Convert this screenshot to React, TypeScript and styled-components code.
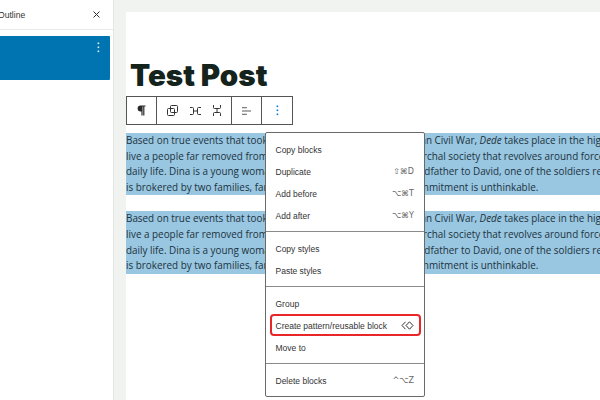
import React from 'react'
import styled, { createGlobalStyle } from 'styled-components'

const GlobalStyle = createGlobalStyle`
  html, body {
    margin: 0;
    padding: 0;
    width: 600px;
    height: 400px;
    overflow: hidden;
    background: #fff;
    font-family: "Liberation Sans", sans-serif;
  }
`

const Page = styled.div`
  position: relative;
  display: flex;
  width: 600px;
  height: 400px;
  overflow: hidden;
`

const Sidebar = styled.aside`
  flex: 0 0 114px;
  box-sizing: border-box;
  border-right: 1px solid #e4e6e4;
  background: #fff;
`

const SidebarHead = styled.div`
  display: flex;
  align-items: center;
  justify-content: space-between;
  height: 30px;
  box-sizing: border-box;
  padding-right: 12px;
  border-bottom: 1px solid #eaecea;
  font-size: 8.6px;
  color: #333;
  & > span {
    margin-left: -2px;
  }
`

const OutlineItem = styled.div`
  display: flex;
  justify-content: flex-end;
  height: 44px;
  margin: 6px 3px 0 0;
  padding: 6px 10px 0 0;
  box-sizing: border-box;
  background: #0073b1;
  border-radius: 0 1px 1px 0;
`

const Main = styled.main`
  flex: 1;
  min-width: 0;
  padding: 12px 0 0 12px;
  background: #f1f3f1;
`

const Canvas = styled.div`
  height: 388px;
  padding-top: 42px;
  box-sizing: border-box;
  background: #fff;
  overflow: hidden;
`

const Title = styled.h1`
  margin: 0 0 37px 4px;
  font-family: Inter, sans-serif;
  font-size: 29.5px;
  font-weight: 900;
  line-height: 42px;
  color: #14231c;
`

const Paragraph = styled.div`
  margin-bottom: 16px;
`

const Line = styled.div`
  height: 15.6px;
  line-height: 15.6px;
  font-family: "Open Sans", sans-serif;
  font-size: 9.9px;
  white-space: nowrap;
  color: #1c3340;
  background: #99c6e0;
`

const Toolbar = styled.div`
  position: absolute;
  left: 126px;
  top: 96px;
  display: flex;
  height: 29px;
  box-sizing: border-box;
  border: 1px solid #555;
  background: #fff;
`

const ToolGroup = styled.div<{ $w: number }>`
  display: flex;
  align-items: center;
  justify-content: space-between;
  width: ${({ $w }) => $w}px;
  box-sizing: border-box;
  padding: 0 10px;
  & + & {
    border-left: 1px solid #555;
  }
  & > svg:only-child {
    margin: 0 auto;
  }
`

const Menu = styled.div`
  position: absolute;
  left: 265px;
  top: 132px;
  width: 160px;
  height: 265px;
  box-sizing: border-box;
  border: 1px solid #6a6a6a;
  border-radius: 2px;
  background: #fff;
`

const Section = styled.div`
  padding: 5px 0;
  & + & {
    border-top: 1px solid #8a8a8a;
  }
`

const Item = styled.div<{ $highlight?: boolean }>`
  position: relative;
  display: flex;
  align-items: center;
  justify-content: space-between;
  height: 22px;
  padding: 1px 10px 0 9.5px;
  box-sizing: border-box;
  font-size: 8.5px;
  white-space: nowrap;
  color: #333;
  ${({ $highlight }) =>
    $highlight &&
    `
    &::after {
      content: '';
      position: absolute;
      left: 3.5px;
      right: 3px;
      top: 0;
      bottom: 0;
      border: 2px solid #e8262a;
      border-radius: 4px;
    }
  `}
`

const Shortcut = styled.span`
  font-family: "DejaVu Sans", sans-serif;
  font-size: 8px;
  color: #666;
`

const Kebab = ({ color }: { color: string }) => (
  <svg width="3" height="11" viewBox="0 0 3 11" fill={color}>
    <rect x="0.6" y="0.5" width="1.6" height="1.6" />
    <rect x="0.6" y="4.5" width="1.6" height="1.6" />
    <rect x="0.6" y="8.5" width="1.6" height="1.6" />
  </svg>
)

const CloseIcon = () => (
  <svg width="9" height="9" viewBox="0 0 9 9" stroke="#333" strokeWidth="1" fill="none">
    <path d="M1.5 1.5l6 6M7.5 1.5l-6 6" />
  </svg>
)

const PilcrowIcon = () => (
  <svg width="9" height="11" viewBox="0 0 9 11" fill="#2a2a2a">
    <path d="M8.5 0.5H3.6a3 3 0 0 0 0 6H4.4V10.5H5.6V1.6H6.2V10.5H7.4V1.6H8.5z" />
  </svg>
)

const GroupIcon = () => (
  <svg width="11" height="11" viewBox="0 0 11 11" stroke="#333" strokeWidth="1" fill="none">
    <rect x="3.5" y="0.5" width="7" height="7" rx="1" />
    <rect x="0.5" y="3.5" width="7" height="7" rx="1" />
  </svg>
)

const RowIcon = () => (
  <svg width="11" height="8" viewBox="0 0 11 8" stroke="#333" strokeWidth="1" fill="none">
    <path d="M0 0.5h2.5a1 1 0 0 1 1 1v5a1 1 0 0 1-1 1H0" />
    <path d="M11 0.5H8.5a1 1 0 0 0-1 1v5a1 1 0 0 0 1 1H11" />
    <path d="M3.5 4h4" />
  </svg>
)

const StackIcon = () => (
  <svg width="8" height="11" viewBox="0 0 8 11" stroke="#333" strokeWidth="1" fill="none">
    <path d="M0.5 0v2.5a1 1 0 0 0 1 1h5a1 1 0 0 0 1-1V0" />
    <path d="M0.5 11V8.5a1 1 0 0 1 1-1h5a1 1 0 0 1 1 1V11" />
    <path d="M4 3.5v4" />
  </svg>
)

const AlignIcon = () => (
  <svg width="11" height="10" viewBox="0 0 11 10" stroke="#333" strokeWidth="1" fill="none">
    <path d="M0 1h6M0 5h11M0 9h6" />
  </svg>
)

const PatternIcon = () => (
  <svg width="13" height="9" viewBox="0 0 13 9" stroke="#333" strokeWidth="1" fill="none">
    <path d="M4.5 0.8L1 4.5l3.5 3.7" />
    <path d="M8.5 0.8L5 4.5l3.5 3.7L12 4.5z" />
  </svg>
)

const lines = [
  <>Based on true events that took place in 1967, through the Nigerian Civil War, <em>Dede</em> takes place in the highlands of the country</>,
  <>live a people far removed from the conflict, in a very strict, patriarchal society that revolves around forced marriage and</>,
  <>daily life. Dina is a young woman promised off to the elderly grandfather to David, one of the soldiers returning home</>,
  <>is brokered by two families, far from love, where any deepest commitment is unthinkable.</>,
]

const menuSections = [
  [
    { label: 'Copy blocks' },
    { label: 'Duplicate', shortcut: '⇧⌘D' },
    { label: 'Add before', shortcut: '⌥⌘T' },
    { label: 'Add after', shortcut: '⌥⌘Y' },
  ],
  [{ label: 'Copy styles' }, { label: 'Paste styles' }],
  [{ label: 'Group' }, { label: 'Create pattern/reusable block', highlight: true }, { label: 'Move to' }],
  [{ label: 'Delete blocks', shortcut: '^⌥Z' }],
]

export default function App() {
  return (
    <>
      <GlobalStyle />
      <Page>
        <Sidebar>
          <SidebarHead>
            <span>Outline</span>
            <CloseIcon />
          </SidebarHead>
          <OutlineItem>
            <Kebab color="#e6f1f7" />
          </OutlineItem>
        </Sidebar>
        <Main>
          <Canvas>
            <Title>Test Post</Title>
            {[0, 1].map((p) => (
              <Paragraph key={p}>
                {lines.map((line, i) => (
                  <Line key={i}>{line}</Line>
                ))}
              </Paragraph>
            ))}
          </Canvas>
        </Main>
        <Toolbar>
          <ToolGroup $w={29}>
            <PilcrowIcon />
          </ToolGroup>
          <ToolGroup $w={75}>
            <GroupIcon />
            <RowIcon />
            <StackIcon />
          </ToolGroup>
          <ToolGroup $w={30}>
            <AlignIcon />
          </ToolGroup>
          <ToolGroup $w={31}>
            <Kebab color="#0a7cc0" />
          </ToolGroup>
        </Toolbar>
        <Menu>
          {menuSections.map((items, s) => (
            <Section key={s}>
              {items.map((item) => (
                <Item key={item.label} $highlight={'highlight' in item}>
                  <span>{item.label}</span>
                  {'shortcut' in item && <Shortcut>{item.shortcut}</Shortcut>}
                  {'highlight' in item && <PatternIcon />}
                </Item>
              ))}
            </Section>
          ))}
        </Menu>
      </Page>
    </>
  )
}
